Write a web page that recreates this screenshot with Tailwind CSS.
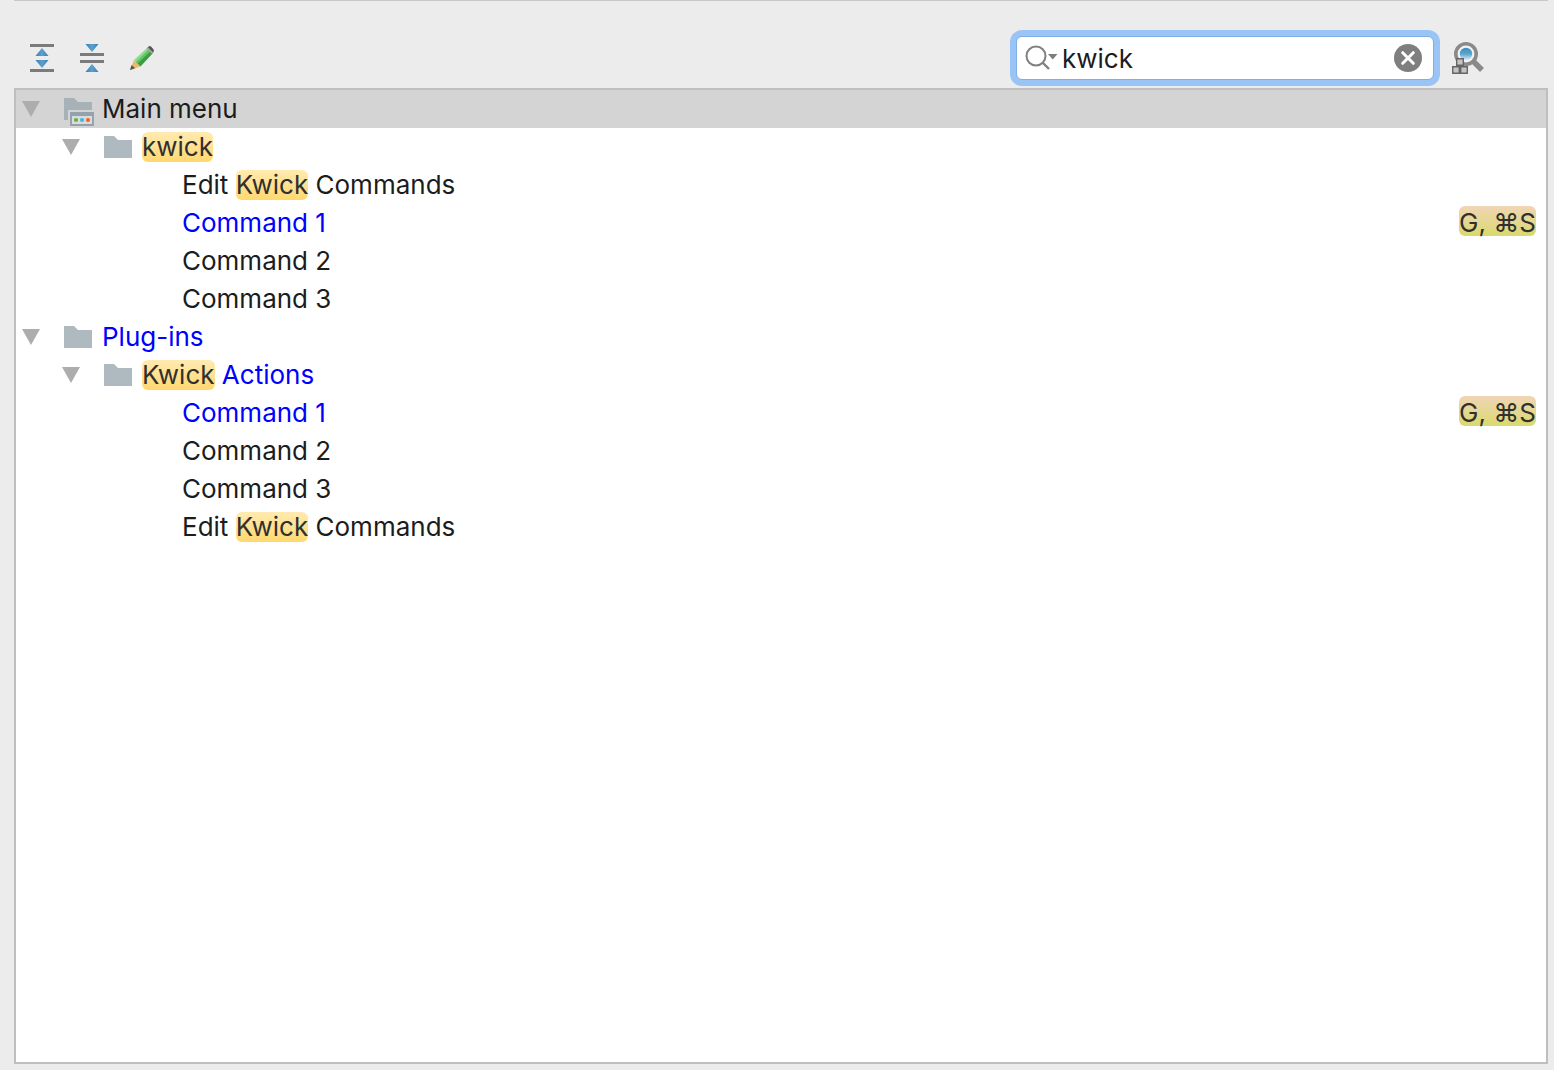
<!DOCTYPE html>
<html lang="en">
<head>
<meta charset="utf-8">
<title>Keymap</title>
<script src="https://cdn.jsdelivr.net/npm/@tailwindcss/browser@4"></script>
</head>
<body class="flex min-h-screen flex-col bg-[#ececec] pr-1.5 pb-1.5 pl-3.5 font-['Inter',sans-serif] text-[26px] leading-[38px] text-[#1c1c1c]">
<svg width="0" height="0" class="absolute" aria-hidden="true">
  <defs>
    <linearGradient id="blue" x1="0" y1="0" x2="1" y2="0"><stop offset="0" stop-color="#3b7fb4"/><stop offset=".5" stop-color="#5ba0cd"/><stop offset="1" stop-color="#3b7fb4"/></linearGradient>
    <linearGradient id="lens" x1="0" y1="0" x2="0" y2="1"><stop offset="0" stop-color="#3c8cbf"/><stop offset=".5" stop-color="#5ba5d0"/><stop offset="1" stop-color="#e2eef5"/></linearGradient>
    <symbol id="arrow" viewBox="0 0 18 16"><path d="M0 0h18L9 16z" fill="#adadad"/></symbol>
    <symbol id="folder" viewBox="0 0 28 22"><path d="M0 0h10l4 4h14v18H0z" fill="#aeb9c0"/></symbol>
  </defs>
</svg>
<header class="flex items-center border-t border-[#c9c9c9] pt-[35px] pr-16 pb-2 pl-4">
  <div class="flex gap-[26px]">
    <button type="button" aria-label="Expand all"><svg class="block" width="24" height="28" viewBox="0 0 24 28"><path d="M0 0h24v3H0zM0 25h24v3H0z" fill="#7b7b7b"/><path d="M12 4l6.500 8h-13zM5.500 16h13L12 24z" fill="url(#blue)"/></svg></button>
    <button type="button" aria-label="Collapse all"><svg class="block" width="24" height="28" viewBox="0 0 24 28"><path d="M0 9h24v3H0zM0 16h24v3H0z" fill="#7b7b7b"/><path d="M5.500 0h13L12 8zM12 20l6.500 8h-13z" fill="url(#blue)"/></svg></button>
    <button type="button" aria-label="Edit shortcut"><svg class="block" width="24" height="28" viewBox="0 0 24 28"><path d="M4 16l6.500 6.500L0 26z" fill="#f3b768"/><path d="M0 26l1.600-5 3.500 3.300z" fill="#555"/><path d="M4 16L17 4l3.500 3.500L7.500 19.500z" fill="#8fdc91"/><path d="M5.800 18L18.600 5.600l2.600 2.600L8.500 20.800z" fill="#63c467"/><path d="M7.600 19.600L20.500 7.300 22.600 9.600 10.500 22.500z" fill="#37a03e"/><path d="M17.500 3.700Q19 1.300 21 2.500l2.400 2.700q1.200 2-.8 4z" fill="#555"/><path d="M16.500 4.500l1.500-1.300 5.200 5.300-1.400 1.300z" fill="#a5a5a5"/></svg></button>
  </div>
  <div role="search" class="ml-auto flex h-11 w-[418px] items-center rounded-md border border-[#7eaee3] bg-white pr-[11px] pl-2 ring-6 ring-[#99c4f5]">
    <button type="button" aria-label="Search history" class="mr-1"><svg class="block" width="33" height="26" viewBox="0 0 33 26" fill="none"><circle cx="11" cy="11" r="9.500" stroke="#808080" stroke-width="2"/><path d="M17.500 17.500l6.500 6.500" stroke="#808080" stroke-width="2.400"/><path d="M23 9h9.500l-4.750 5.500z" fill="#7d7d7d"/></svg></button>
    <input type="text" aria-label="Search actions" value="kwick" class="h-10 min-w-0 flex-1 bg-transparent outline-none">
    <button type="button" aria-label="Clear search"><svg class="block" width="28" height="28" viewBox="0 0 28 28"><circle cx="14" cy="14" r="14" fill="#7f7f7f"/><path d="M8.700 8.700l10.600 10.600M19.300 8.700L8.700 19.300" stroke="#fff" stroke-width="3" stroke-linecap="round"/></svg></button>
  </div>
  <button type="button" aria-label="Find actions by shortcut" class="ml-[18px]"><svg class="block" width="32" height="32" viewBox="0 0 32 32"><path d="M20 18l10 10" stroke="#8a8a8a" stroke-width="5.500"/><circle cx="14" cy="12" r="10.200" fill="#f2f2f2" stroke="#8a8a8a" stroke-width="3.600"/><circle cx="14" cy="12" r="6.200" fill="url(#lens)"/><g fill="#c4c4c4" stroke="#666" stroke-width="1.400"><path d="M4.700 16.700h6.600v6.600H4.700zM.7 24.700h6.600v6.600H.7zM8.700 24.700h6.600v6.600H8.700z"/></g></svg></button>
</header>
<main class="flex-1 border-2 border-[#bfbfbf] bg-white">
  <ul role="tree" aria-label="Keymap actions">
    <li role="treeitem" aria-expanded="true" aria-selected="true">
      <div class="flex h-[38px] items-center bg-[#d4d4d4] pl-1.5">
        <button type="button" aria-label="Collapse Main menu" class="mr-6"><svg class="block" width="18" height="16"><use href="#arrow"/></svg></button>
        <svg class="mr-2" width="30" height="34" viewBox="0 -6 30 34"><path d="M0 0h10l4 4h14v10H6v8H0z" fill="#a6b1b8"/><path d="M4 12h24v2H6v8H4z" fill="#d4d4d4"/><path d="M6 14h24v14H6z" fill="#94a2ad"/><path d="M8 18h20v8H8z" fill="#dbdbdb"/><circle cx="12" cy="22" r="2.100" fill="#62b543"/><circle cx="18" cy="22" r="2.100" fill="#40b6e0"/><circle cx="24" cy="22" r="2.100" fill="#f26522"/></svg>
        <span>Main menu</span>
      </div>
      <ul role="group">
        <li role="treeitem" aria-expanded="true">
          <div class="flex h-[38px] items-center pl-[46px]">
            <button type="button" aria-label="Collapse kwick" class="mr-6"><svg class="block" width="18" height="16"><use href="#arrow"/></svg></button>
            <svg class="mr-2.5" width="28" height="22"><use href="#folder"/></svg>
            <mark class="rounded-md bg-linear-to-b from-[#ffeab0] to-[#ffd86e] leading-[30px] text-[#303030]">kwick</mark>
          </div>
          <ul role="group">
            <li role="treeitem" class="flex h-[38px] items-center pl-[166px] whitespace-pre"><span>Edit </span><mark class="rounded-md bg-linear-to-b from-[#ffeab0] to-[#ffd86e] leading-[30px] text-[#303030]">Kwick</mark><span> Commands</span></li>
            <li role="treeitem" class="flex h-[38px] items-center justify-between pr-2.5 pl-[166px] text-[#0000ff]"><span>Command 1</span><kbd class="mb-1 rounded-md bg-linear-to-b from-[#f0d5b4] to-[#dad96c] pt-1 font-['Inter',sans-serif] text-[26px] leading-[26px] text-[#303030]">G, ⌘S</kbd></li>
            <li role="treeitem" class="flex h-[38px] items-center pl-[166px]">Command 2</li>
            <li role="treeitem" class="flex h-[38px] items-center pl-[166px]">Command 3</li>
          </ul>
        </li>
      </ul>
    </li>
    <li role="treeitem" aria-expanded="true">
      <div class="flex h-[38px] items-center pl-1.5 text-[#0000ff]">
        <button type="button" aria-label="Collapse Plug-ins" class="mr-6"><svg class="block" width="18" height="16"><use href="#arrow"/></svg></button>
        <svg class="mr-2.5" width="28" height="22"><use href="#folder"/></svg>
        <span>Plug-ins</span>
      </div>
      <ul role="group">
        <li role="treeitem" aria-expanded="true">
          <div class="flex h-[38px] items-center pl-[46px] whitespace-pre text-[#0000ff]">
            <button type="button" aria-label="Collapse Kwick Actions" class="mr-6"><svg class="block" width="18" height="16"><use href="#arrow"/></svg></button>
            <svg class="mr-2.5" width="28" height="22"><use href="#folder"/></svg>
            <mark class="rounded-md bg-linear-to-b from-[#ffeab0] to-[#ffd86e] leading-[30px] text-[#303030]">Kwick</mark><span> Actions</span>
          </div>
          <ul role="group">
            <li role="treeitem" class="flex h-[38px] items-center justify-between pr-2.5 pl-[166px] text-[#0000ff]"><span>Command 1</span><kbd class="mb-1 rounded-md bg-linear-to-b from-[#f0d5b4] to-[#dad96c] pt-1 font-['Inter',sans-serif] text-[26px] leading-[26px] text-[#303030]">G, ⌘S</kbd></li>
            <li role="treeitem" class="flex h-[38px] items-center pl-[166px]">Command 2</li>
            <li role="treeitem" class="flex h-[38px] items-center pl-[166px]">Command 3</li>
            <li role="treeitem" class="flex h-[38px] items-center pl-[166px] whitespace-pre"><span>Edit </span><mark class="rounded-md bg-linear-to-b from-[#ffeab0] to-[#ffd86e] leading-[30px] text-[#303030]">Kwick</mark><span> Commands</span></li>
          </ul>
        </li>
      </ul>
    </li>
  </ul>
</main>
</body>
</html>
